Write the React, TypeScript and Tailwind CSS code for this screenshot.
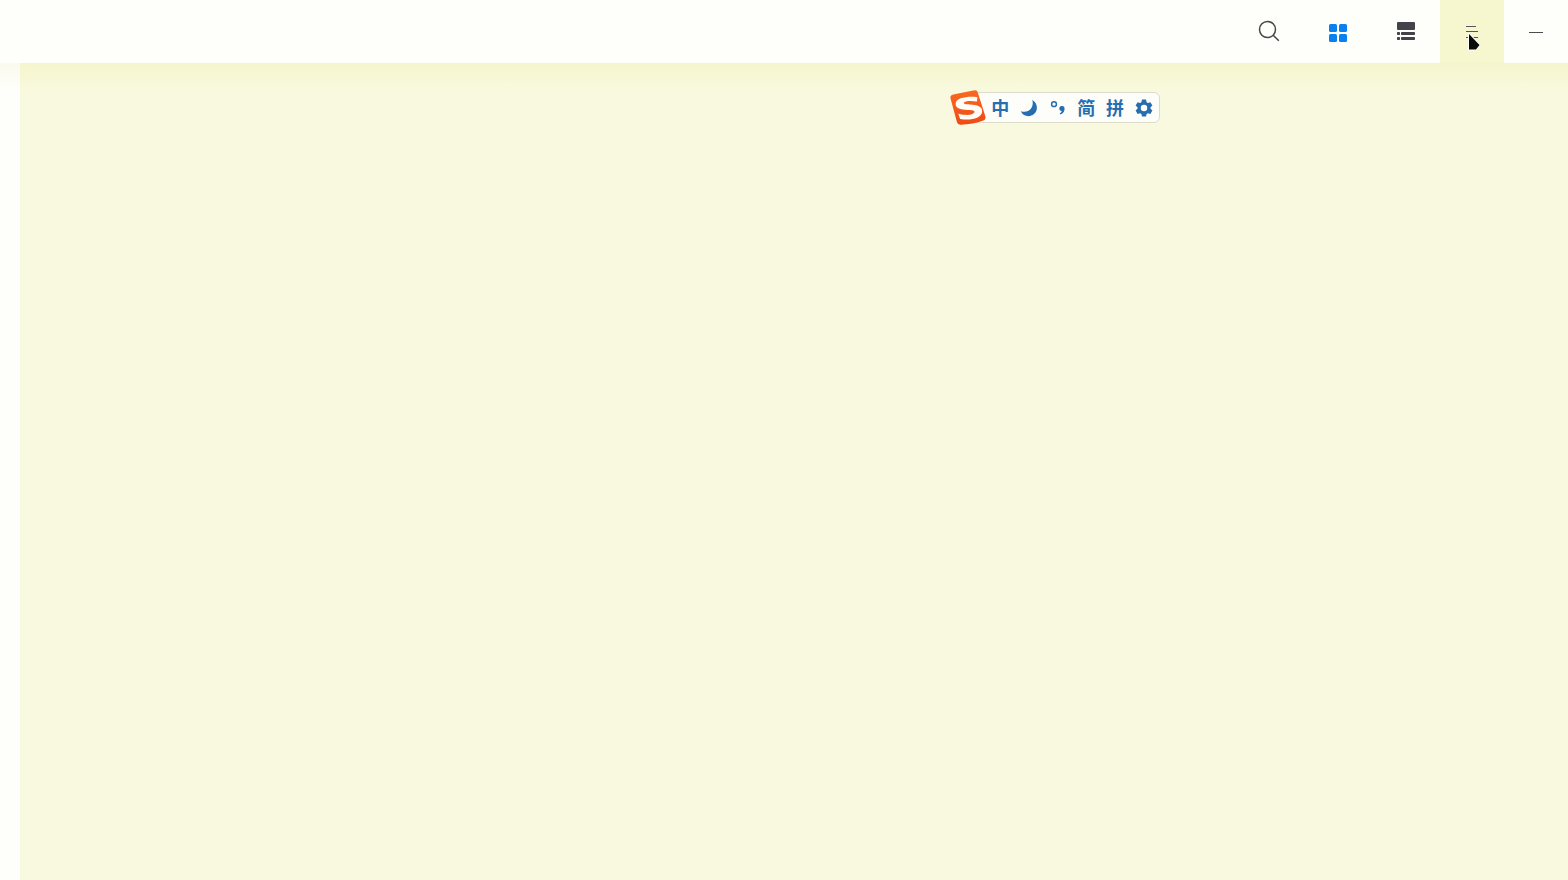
import React from "react";

type IconButtonProps = {
  label: string;
  className?: string;
  children: React.ReactNode;
};

function ToolButton({ label, className = "w-[68px]", children }: IconButtonProps) {
  return (
    <button type="button" aria-label={label} className={`flex h-full items-center justify-center ${className}`}>
      {children}
    </button>
  );
}

function ImeButton({ label, className = "", children }: IconButtonProps) {
  return (
    <button type="button" aria-label={label} className={`flex h-full flex-1 items-center justify-center ${className}`}>
      {children}
    </button>
  );
}

function SearchIcon() {
  return (
    <svg width="24" height="24" viewBox="0 0 24 24" fill="none" stroke="#45454a" strokeWidth="1.5">
      <circle cx="9.5" cy="9.5" r="8" />
      <path d="M15.2 15.2 20.8 20.8" />
    </svg>
  );
}

function GridIcon() {
  return (
    <svg width="18" height="20" viewBox="0 0 18 20" fill="#0a80f0">
      <rect x="0" y="2" width="8" height="8" rx="1.5" />
      <rect x="10" y="2" width="8" height="8" rx="1.5" />
      <rect x="0" y="12" width="8" height="8" rx="1.5" />
      <rect x="10" y="12" width="8" height="8" rx="1.5" />
    </svg>
  );
}

function ListIcon() {
  return (
    <svg width="18" height="20" viewBox="0 0 18 20" fill="#43434b">
      <rect x="0" y="0" width="18" height="8" rx="1" />
      <rect x="0" y="10" width="3" height="3" rx=".7" />
      <rect x="4" y="10" width="14" height="3" rx=".7" />
      <rect x="0" y="15" width="3" height="3" rx=".7" />
      <rect x="4" y="15" width="14" height="3" rx=".7" />
    </svg>
  );
}

function MenuIcon() {
  return (
    <svg width="14" height="14" viewBox="0 0 14 14" stroke="#55555c" strokeWidth="1.2">
      <path d="M1 1.5h10M1 6.5h12M1 12.5h12" />
    </svg>
  );
}

function Pointer() {
  return (
    <svg className="pointer-events-none absolute left-[27px] top-[32px]" width="16" height="20" viewBox="0 0 16 20">
      <path d="M2 2V17.5H9L12.5 13Z" fill="#0b0b0c" stroke="#fff" strokeWidth="2" strokeLinejoin="round" paintOrder="stroke" />
    </svg>
  );
}

function ImeLogo() {
  return (
    <svg className="shrink-0" width="36" height="36" viewBox="0 0 36 36">
      <defs>
        <linearGradient id="logo-fill" x1="0" y1="0" x2="0" y2="1">
          <stop offset="0" stopColor="#f96a22" />
          <stop offset="1" stopColor="#ef4a16" />
        </linearGradient>
      </defs>
      <path
        d="M3.2 4.6 24.5.3Q27.2-.1 27.8 2.5L35.4 26.6Q36.1 29.5 33.4 30.6 23 34.8 10.2 34.7 7.6 34.7 6.9 32L.4 8Q-.2 5.3 3.2 4.6Z"
        fill="url(#logo-fill)"
      />
      <path
        d="M27.4 7.2C19 6 5.8 7.3 5.6 13.9c-.2 5.6 8.4 5.8 14.2 6 3.6.2 5.3 1 4.7 2.4-1.3 2.8-8.2 3.4-16.2 1.4l1.8 5.2c9.7 1.8 21.3-.2 22-7.2.5-5.4-5-6.9-12.2-7.2-4.2-.2-6.5-.4-6-1.7.8-1.9 6.4-2.4 13-1.3Z"
        fill="#fffdf5"
      />
    </svg>
  );
}

function MoonIcon() {
  return (
    <svg width="18" height="18" viewBox="0 0 18 18">
      <path d="M12.2.8C18 4.5 18.2 11.2 14 15 9.8 18.7 3.3 17.5.8 12.2 5.3 13.6 9.5 12.2 11.5 8.8 13 6.2 13.1 3.3 12.2.8Z" fill="#276eb0" />
    </svg>
  );
}

function PunctuationIcon() {
  return (
    <svg width="16" height="16" viewBox="0 0 16 16">
      <circle cx="4" cy="4.2" r="2.4" fill="none" stroke="#276eb0" strokeWidth="1.5" />
      <path d="M11.6 6c2.3-.3 3.4 1.4 2.9 3.7-.5 2.5-1.9 4-4.1 4.8l-.7-1.1c1.2-.7 1.8-1.5 2-2.5-1.5 0-2.4-.9-2.4-2.3 0-1.4.8-2.4 2.3-2.6Z" fill="#276eb0" />
    </svg>
  );
}

function GearIcon() {
  return (
    <svg width="18" height="18" viewBox="0 0 24 24" fill="#276eb0">
      <path
        fillRule="evenodd"
        d="m9.3.8h5.4l.8 3.4 1.7 1 3.3-1 2.7 4.6L20.7 11v2l2.5 2.3-2.7 4.6-3.3-1-1.7 1-.8 3.3H9.3l-.8-3.3-1.7-1-3.3 1-2.7-4.6L3.3 13v-2L.8 8.8l2.7-4.6 3.3 1 1.7-1ZM12 7.7a4.3 4.3 0 1 0 0 8.6 4.3 4.3 0 0 0 0-8.6Z"
      />
    </svg>
  );
}

function InputMethodBar() {
  return (
    <div className="absolute right-[408px] top-[90px] flex h-[35px] w-[210px] items-center font-['Noto_Sans_CJK_SC',sans-serif] text-lg font-bold leading-none text-[#276eb0]">
      <div className="absolute inset-y-[2px] left-[18px] right-0 rounded-md border border-[#dcdcc8] bg-[#fdfdfa]" />
      <div className="relative flex h-full w-full items-center pr-[2px]">
        <ImeLogo />
        <ImeButton label="中" className="pb-[2px]">中</ImeButton>
        <ImeButton label="Half width"><MoonIcon /></ImeButton>
        <ImeButton label="Punctuation"><PunctuationIcon /></ImeButton>
        <ImeButton label="简" className="pb-[2px]">简</ImeButton>
        <ImeButton label="拼" className="pb-[2px]">拼</ImeButton>
        <ImeButton label="Settings"><GearIcon /></ImeButton>
      </div>
    </div>
  );
}

export default function App() {
  return (
    <div className="relative flex min-h-screen flex-col bg-[#fefefa] font-['Liberation_Sans',sans-serif]">
      <header className="flex h-[63px] shrink-0 justify-end">
        <ToolButton label="Search"><SearchIcon /></ToolButton>
        <ToolButton label="Grid view"><GridIcon /></ToolButton>
        <ToolButton label="List view"><ListIcon /></ToolButton>
        <ToolButton label="Menu" className="relative w-16 bg-[#f6f6cf]">
          <MenuIcon />
          <Pointer />
        </ToolButton>
        <ToolButton label="Minimize" className="w-16">
          <span className="mt-[2px] h-px w-[14px] bg-[#4b4b52]" />
        </ToolButton>
      </header>
      <div className="flex flex-1">
        <aside className="w-5 shrink-0 bg-linear-to-b from-[#fafaee] to-[#fefefa] to-[24px]" />
        <main className="flex-1 bg-linear-to-b from-[#f5f5cd] to-[#f9f9e0] to-[30px]" />
      </div>
      <InputMethodBar />
    </div>
  );
}
